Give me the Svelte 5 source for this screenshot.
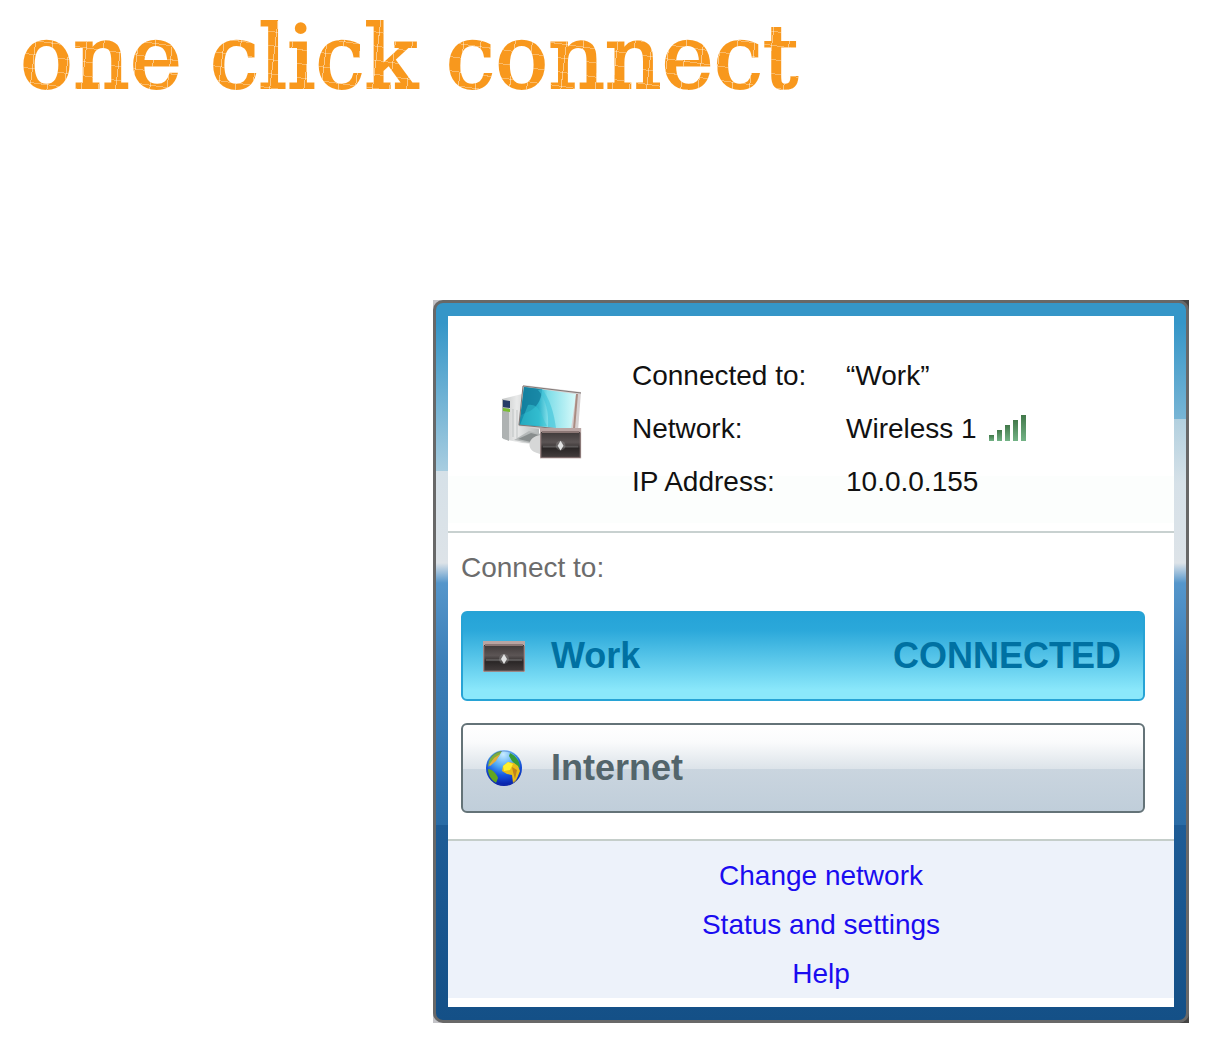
<script lang="ts">
	type Profile = { id: string; name: string; status: string };

	const profiles: Profile[] = [
		{ id: 'work', name: 'Work', status: 'CONNECTED' },
		{ id: 'internet', name: 'Internet', status: '' }
	];

	const links = ['Change network', 'Status and settings', 'Help'];
</script>

{#snippet caseShape()}
	<rect width="42" height="31" fill="#b9a5a3" />
	<rect x="1" y="4" width="40" height="26" fill="url(#leather)" />
	<path d="M2 4h38" stroke="#8b7775" stroke-width="2" />
	<path d="M3 19h36" stroke="#888" stroke-width="2" opacity=".4" />
	<path d="M1 5v25h40V5" fill="none" stroke="#7d6b6a" stroke-width="1" />
	<ellipse cx="21" cy="18" rx="5" ry="5" fill="#aaa" opacity=".3" />
	<path d="m21 13 3 5-3 5-3-5z" fill="#e2e2e2" />
{/snippet}

<svg class="defs" width="0" height="0" aria-hidden="true">
	<defs>
		<linearGradient id="leather" x1="0" y1="0" x2="0" y2="1">
			<stop offset="0" stop-color="#3f3939" />
			<stop offset=".4" stop-color="#5c5555" />
			<stop offset=".5" stop-color="#4b4545" />
			<stop offset=".65" stop-color="#2b2727" />
			<stop offset="1" stop-color="#433d3d" />
		</linearGradient>
		<linearGradient id="screen" x1="0" y1="0" x2="1" y2="0">
			<stop offset="0" stop-color="#138ca9" />
			<stop offset=".35" stop-color="#2fb4cb" />
			<stop offset=".5" stop-color="#7ddde8" />
			<stop offset="1" stop-color="#d8fafa" />
		</linearGradient>
		<linearGradient id="tower" x1="0" y1="0" x2="1" y2="0">
			<stop offset="0" stop-color="#c4c6c6" />
			<stop offset=".4" stop-color="#e9eaea" />
			<stop offset="1" stop-color="#b4b8b8" />
		</linearGradient>
		<linearGradient id="bar" x1="0" y1="0" x2="0" y2="1">
			<stop offset="0" stop-color="#42784a" />
			<stop offset="1" stop-color="#73b386" />
		</linearGradient>
		<radialGradient id="sea" cx=".48" cy=".12" r=".9">
			<stop offset="0" stop-color="#c8ecff" />
			<stop offset=".4" stop-color="#4aa5f4" />
			<stop offset=".65" stop-color="#1555e0" />
			<stop offset="1" stop-color="#06149c" />
		</radialGradient>
	</defs>
</svg>

<main>
	<h1>one click connect</h1>

	<div class="corner">
		<div class="frame">
			<div class="panel">
				<section class="summary">
					<svg class="computer" viewBox="0 0 84 84" aria-hidden="true">
						<path d="M2 18 22 13 39 17v46L22 62 3 58z" fill="url(#tower)" />
						<path d="M2 18 9 21v39l-7-3z" fill="#aeb2b2" />
						<path d="m3 19 7 1v7l-7-1z" fill="#263b67" />
						<path d="m3 27 7 1v3l-7-1z" fill="#79bd32" />
						<path d="M13 28v28M17 29v28" stroke="#bfc3c3" />
						<path d="m14 59 15-9 20 5-13 8z" fill="#b5b9b9" />
						<path d="m18 58 13-6 12 3-12 6z" fill="#888d8d" />
						<path d="M23 4 81 11 78 50 51 50 18 45z" fill="#d6d0d0" />
						<path d="M24 6 76 13 71 48 19 44z" fill="url(#screen)" />
						<path d="M24 6 42 8C42 20 35 27 30 30L21 34z" fill="#127a9a" opacity=".75" />
						<path d="M42 8c8 10 12 24 14 39l-8-1C49 32 46 18 38 9z" fill="#3fc3d9" opacity=".6" />
						<path d="M28 24C39 22 41 34 47 45l-27-1z" fill="#36c5d4" opacity=".5" />
						<path d="m23 5 58 7M23 5l-4 39 52 5" fill="none" stroke="#817876" />
						<path d="M77 13 74 48" stroke="#a98c82" stroke-width="2" />
						<path d="M40 54c-13 2-14 15-3 18l9 3V54z" fill="#d6d7d7" />
						<g transform="translate(40 47) scale(.98)">{@render caseShape()}</g>
					</svg>
					<dl>
						<dt>Connected to:</dt>
						<dd>“Work”</dd>
						<dt>Network:</dt>
						<dd>
							Wireless 1
							<svg class="signal" viewBox="0 2 38 28" role="img" aria-label="Signal strength">
								{#each [6, 11, 16, 21, 26] as height, i}
									<rect x={i * 8} y={28 - height} width="5" {height} fill="url(#bar)" />
								{/each}
							</svg>
						</dd>
						<dt>IP Address:</dt>
						<dd>10.0.0.155</dd>
					</dl>
				</section>

				<section class="profiles">
					<h2>Connect to:</h2>
					{#each profiles as profile (profile.id)}
						<button type="button" class={profile.id}>
							<span class="icon">
								{#if profile.id === 'work'}
									<svg width="42" height="31" viewBox="0 0 42 31" aria-hidden="true">
										{@render caseShape()}
									</svg>
								{:else}
									<svg width="38" height="38" viewBox="0 0 38 38" aria-hidden="true">
										<circle cx="19" cy="19" r="18" fill="url(#sea)" />
										<path d="M4 12C6 6 12 2 17 2l-3 5-7 7-4 4z" fill="#7eaf3c" />
										<path d="M4 16 9 9l6-4-4 7-6 5z" fill="#e3ad3c" />
										<path d="M3 20c4 0 9 5 10 9l-2 5C6 31 3 26 3 20z" fill="#62a51f" />
										<path d="M25 4c5 2 10 8 10 15l-3-2-5-5-3-5z" fill="#379b37" />
										<path d="m18 17 5-4 6 1 4 3 2 5-4 10-3 2-1-8-5-1-5-3z" fill="#e8bd18" />
										<path d="m18 17 5-4 5 2-3 6-6 1z" fill="#fff02d" />
										<path d="m27 18 5 3-2 9-2-7z" fill="#bf851b" />
										<circle cx="19" cy="19" r="17" fill="none" stroke="#1740b5" opacity=".4" />
									</svg>
								{/if}
							</span>
							<span>{profile.name}</span>
							<span class="status">{profile.status}</span>
						</button>
					{/each}
				</section>

				<nav>
					{#each links as link}
						<a href="#{link.toLowerCase().replaceAll(' ', '-')}">{link}</a>
					{/each}
				</nav>
			</div>
		</div>
	</div>
</main>

<style>
	:global(body) {
		margin: 0;
		background: #fff;
	}
	.defs {
		position: absolute;
	}
	main {
		display: grid;
		grid-template-columns: 433fr 756fr;
		padding: 0 24px 26px 0;
		font-family: 'Liberation Sans', Arial, sans-serif;
		font-size: 28px;
		color: #111;
	}
	h1 {
		grid-column: 1 / -1;
		margin: 0 0 188px;
		padding: 4px 0 0 20px;
		font-family: 'DejaVu Serif', serif;
		font-size: 88px;
		font-weight: 400;
		line-height: 108px;
		white-space: nowrap;
		/* pencil scratches across the letters */
		background:
			repeating-linear-gradient(97deg, transparent 0 6px, #fff7 6px 7px, transparent 7px 17px),
			repeating-linear-gradient(8deg, transparent 0 5px, #fff5 5px 6px, transparent 6px 14px),
			#f8981d;
		background-clip: text;
		-webkit-text-stroke: 2px transparent;
		color: transparent;
	}
	.corner {
		grid-column: 2;
		background: linear-gradient(90deg, #c4c4c8 50%, #444 50%);
	}
	.frame {
		padding: 13px 12px;
		border: 3px solid #686868;
		border-radius: 10px;
		background:
			linear-gradient(#3596c8 0, #3596c8 20px, #78b5d5 116px, #b2d0df 116px, #d6e1e8 180px, #dde3e8 260px, #5596cb 280px, #3d7fb8 360px, #2a6ca6 522px, #1e5c96 522px, #145087 100%) right / 50% 100% no-repeat,
			linear-gradient(#3596c8 0, #3596c8 20px, #a8cde0 168px, #d6e1e8 168px, #dde3e8 260px, #5596cb 280px, #3d7fb8 360px, #2a6ca6 522px, #1e5c96 522px, #145087 100%);
	}
	.panel {
		background: #fff;
		padding-bottom: 9px;
	}
	.summary {
		display: flex;
		gap: 48px;
		padding: 33px 52px 23px;
		border-bottom: 2px solid #c8d1d0;
		background: linear-gradient(#fff 160px, #fcfefd 160px 207px, #fff 207px);
	}
	.computer {
		flex: none;
		width: 84px;
		height: 84px;
		margin-top: 32px;
	}
	dl {
		display: grid;
		grid-template-columns: 214px auto;
		line-height: 53px;
		margin: 0;
	}
	dd {
		margin: 0;
		display: flex;
		align-items: center;
		gap: 12px;
		white-space: nowrap;
	}
	.signal {
		width: 38px;
		height: 28px;
	}
	.profiles {
		display: flex;
		flex-direction: column;
		gap: 22px;
		padding: 19px 29px 26px 13px;
		border-bottom: 2px solid #c5ceca;
	}
	h2 {
		margin: 0 0 5px;
		font-size: 28px;
		font-weight: 400;
		line-height: 32px;
		color: #6c6c6c;
	}
	button {
		display: flex;
		align-items: center;
		height: 90px;
		padding: 0 22px 0 18px;
		border: 2px solid #647378;
		border-radius: 6px;
		font: bold 36px 'Liberation Sans', Arial, sans-serif;
		color: #53656b;
		background: linear-gradient(#fff 0, #fafbfc 20%, #dce3e9 51%, #cad5df 51%, #c0ceda 100%);
		cursor: pointer;
	}
	button.work {
		border-color: #27a3d5;
		color: #0071a2;
		background: linear-gradient(#25a3d7 0, #2ba8da 20%, #8be8fb 90%);
	}
	.icon {
		display: flex;
		justify-content: center;
		width: 46px;
		margin-right: 24px;
	}
	.status {
		margin-left: auto;
	}
	nav {
		display: flex;
		flex-direction: column;
		align-items: center;
		padding: 10px 0 0 20px;
		background: #edf2fa;
	}
	a {
		line-height: 49px;
		color: #1a0cf0;
		text-decoration: none;
	}
</style>
